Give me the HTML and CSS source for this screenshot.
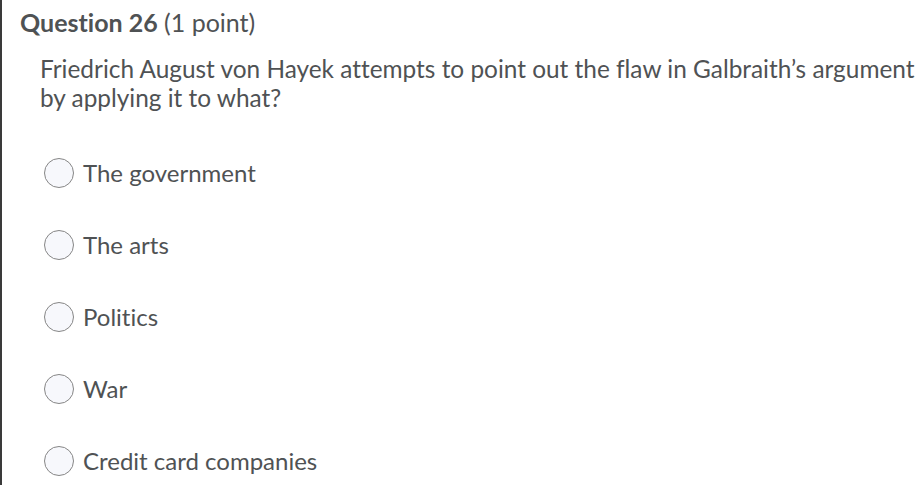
FILE: index.html
```html
<!DOCTYPE html>
<html>
<head>
<meta charset="utf-8">
<link rel="stylesheet" href="styles.css">
</head>
<body>
<div class="frame">
  <h2 class="qtitle"><strong>Question 26</strong> (1 point)</h2>
  <div class="qbody">
    <p class="prompt">Friedrich August von Hayek attempts to point out the flaw in Galbraith’s argument by applying it to what?</p>
    <div class="options">
      <label class="opt"><span class="radio"></span><span>The government</span></label>
      <label class="opt"><span class="radio"></span><span>The arts</span></label>
      <label class="opt"><span class="radio"></span><span>Politics</span></label>
      <label class="opt"><span class="radio"></span><span>War</span></label>
      <label class="opt"><span class="radio"></span><span>Credit card companies</span></label>
    </div>
  </div>
</div>
</body>
</html>
```

FILE: styles.css
```css
html, body {
  margin: 0;
  padding: 0;
  background: #ffffff;
}
body {
  font-family: Lato, "Liberation Sans", sans-serif;
  color: #4f5254;
  overflow: hidden;
  font-variant-ligatures: none;
}
.frame {
  border-left: 2px solid #3a3a3a;
  height: 485px;
  box-sizing: border-box;
  padding: 7px 0 0 18px;
}
.qtitle {
  margin: 0;
  font-size: 25px;
  font-weight: 400;
  line-height: 30px;
  white-space: nowrap;
}
.qtitle strong {
  font-weight: 700;
}
.qbody {
  padding-left: 20px;
}
.prompt {
  margin: 17px 0 0;
  font-size: 24.4px;
  line-height: 29px;
  width: 890px;
}
.options {
  display: flex;
  flex-direction: column;
  gap: 42px;
  margin-top: 46px;
}
.opt {
  display: flex;
  align-items: center;
  gap: 9px;
  font-size: 24px;
  line-height: 30px;
  margin-left: 4px;
}
.radio {
  width: 28px;
  height: 28px;
  border: 1px solid #868686;
  border-radius: 50%;
  background: #f7f8fc;
  flex: none;
}
```
